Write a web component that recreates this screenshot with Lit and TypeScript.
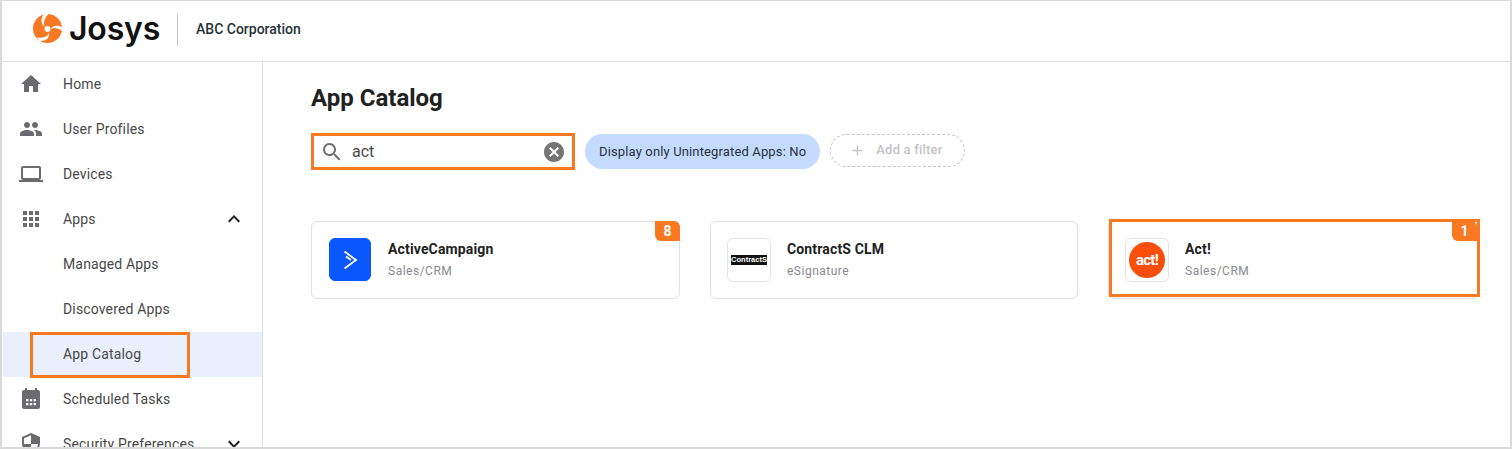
import { css, html, LitElement, svg } from 'lit';
import { customElement } from 'lit/decorators.js';

const icons = {
  home: svg`<path d="M10 20v-6h4v6h5v-8h3L12 3 2 12h3v8z"/>`,
  people: svg`<path d="M16 11c1.66 0 2.99-1.34 2.99-3S17.66 5 16 5c-1.66 0-3 1.34-3 3s1.34 3 3 3zm-8 0c1.66 0 2.99-1.34 2.99-3S9.66 5 8 5C6.34 5 5 6.34 5 8s1.34 3 3 3zm0 2c-2.33 0-7 1.17-7 3.5V19h14v-2.5c0-2.33-4.67-3.5-7-3.5zm8 0c-.29 0-.62.02-.97.05 1.16.84 1.97 1.97 1.97 3.45V19h6v-2.5c0-2.33-4.67-3.5-7-3.5z"/>`,
  laptop: svg`<path d="M20 18c1.1 0 1.99-.9 1.99-2L22 6c0-1.1-.9-2-2-2H4c-1.1 0-2 .9-2 2v10c0 1.1.9 2 2 2H0v2h24v-2h-4zM4 6h16v10H4V6z"/>`,
  apps: svg`<path d="M4 8h4V4H4v4zm6 12h4v-4h-4v4zm-6 0h4v-4H4v4zm0-6h4v-4H4v4zm6 0h4v-4h-4v4zm6-10v4h4V4h-4zm-6 4h4V4h-4v4zm6 6h4v-4h-4v4zm0 6h4v-4h-4v4z"/>`,
  calendar: svg`<path fill-rule="evenodd" d="M6 1h2v2h8V1h2v2h1c1.1 0 2 .9 2 2v15c0 1.1-.9 2-2 2H5c-1.1 0-2-.9-2-2V5c0-1.1.9-2 2-2h1V1zm1 11v2.200h2.400V12H7zm3.800 0v2.200h2.400V12h-2.400zm3.800 0v2.200H17V12h-2.400zM7 16v2.200h2.400V16H7zm3.800 0v2.200h2.400V16h-2.400zm3.800 0v2.200H17V16h-2.400z"/>`,
  shield: svg`<path fill-rule="evenodd" d="M12 1 3 5v6c0 5.500 3.800 10.700 9 12 5.200-1.300 9-6.500 9-12V5l-9-4zm0 2.200V12H5V6.300l7-3.100zM12 12h7c-.5 4.100-3.300 7.800-7 8.900V12z"/>`,
  up: svg`<path d="M7.410 15.410 12 10.830l4.590 4.580L18 14l-6-6-6 6z"/>`,
  down: svg`<path d="M7.410 8.590 12 13.170l4.590-4.580L18 10l-6 6-6-6z"/>`,
  search: svg`<path d="M15.500 14h-.79l-.28-.27C15.410 12.590 16 11.110 16 9.500 16 5.910 13.090 3 9.500 3S3 5.910 3 9.500 5.910 16 9.500 16c1.610 0 3.090-.59 4.230-1.570l.27.28v.79l5 4.990L20.490 19l-4.990-5zm-6 0C7.010 14 5 11.990 5 9.500S7.010 5 9.500 5 14 7.010 14 9.500 11.990 14 9.500 14z"/>`,
  cancel: svg`<path d="M12 2C6.470 2 2 6.470 2 12s4.470 10 10 10 10-4.470 10-10S17.530 2 12 2zm5 13.590L15.590 17 12 13.410 8.410 17 7 15.590 10.590 12 7 8.410 8.410 7 12 10.590 15.590 7 17 8.410 13.410 12 17 15.590z"/>`,
  plus: svg`<path d="M19 13h-6v6h-2v-6H5v-2h6V5h2v6h6v2z"/>`,
};

type IconName = keyof typeof icons;

const icon = (name: IconName, size = 24) =>
  html`<svg class="icon" width=${size} height=${size} viewBox="0 0 24 24" fill="currentColor">${icons[name]}</svg>`;

interface NavItem {
  label: string;
  icon?: IconName;
  chevron?: IconName;
  active?: boolean;
}

const NAV: NavItem[] = [
  { label: 'Home', icon: 'home' },
  { label: 'User Profiles', icon: 'people' },
  { label: 'Devices', icon: 'laptop' },
  { label: 'Apps', icon: 'apps', chevron: 'up' },
  { label: 'Managed Apps' },
  { label: 'Discovered Apps' },
  { label: 'App Catalog', active: true },
  { label: 'Scheduled Tasks', icon: 'calendar' },
  { label: 'Security Preferences', icon: 'shield', chevron: 'down' },
];

@customElement('app-root')
export class AppRoot extends LitElement {
  static override styles = css`
    :host {
      display: block;
      box-sizing: border-box;
      height: 449px;
      overflow: hidden;
      background: #fff;
      border: solid #d9d9d9;
      border-width: 1px 2px 2px 2px;
      font-family: Roboto, 'Liberation Sans', sans-serif;
      color: #212121;
    }

    * {
      box-sizing: border-box;
    }

    .icon {
      display: block;
      flex: none;
    }

    .header {
      display: flex;
      align-items: center;
      height: 61px;
      margin-left: 1px;
      padding: 0 0 4px 30px;
      border-bottom: 1px solid #e0e0e0;
    }

    .mark {
      display: block;
      flex: none;
      margin-bottom: 1px;
    }

    .wordmark {
      margin-left: 7px;
      font-family: Inter, Roboto, sans-serif;
      font-size: 32px;
      font-weight: 600;
      letter-spacing: -0.2px;
      color: #111;
      line-height: 1;
    }

    .divider {
      width: 1px;
      height: 32px;
      margin: 2px 18px 0 17px;
      background: #c4c4c4;
    }

    .company {
      font-size: 14px;
      font-weight: 500;
      color: #263238;
    }

    .body {
      display: flex;
      height: 386px;
      margin-left: 1px;
    }

    .sidebar {
      flex: none;
      width: 260px;
      border-right: 1px solid #e0e0e0;
    }

    .nav-row {
      position: relative;
      display: flex;
      align-items: center;
      height: 45px;
      padding: 0 0 2px 60px;
      font-size: 14px;
      letter-spacing: 0.15px;
      color: #484848;
    }

    .nav-row.active {
      background: #e9f0fc;
    }

    .nav-icon {
      position: absolute;
      left: 16px;
      top: 10px;
      color: #6b6b6f;
    }

    .nav-chevron {
      position: absolute;
      right: 16px;
      top: 10px;
      color: #212121;
    }

    .mark-box {
      position: absolute;
      border: 3px solid #f97822;
      pointer-events: none;
    }

    .nav-mark {
      left: 27px;
      top: 0;
      width: 160px;
      height: 46px;
    }

    .main {
      flex: 1;
      padding: 21px 0 0 48px;
    }

    h1 {
      margin: 0;
      font-size: 24px;
      line-height: 30px;
      font-weight: 700;
      letter-spacing: 0;
      color: #212121;
    }

    .filters {
      display: flex;
      align-items: flex-start;
      margin-top: 20px;
    }

    .search {
      display: flex;
      align-items: center;
      width: 264px;
      height: 37px;
      padding: 0 6px;
      border: 3px solid #f97822;
      color: #6f6f6f;
    }

    .search-text {
      flex: 1;
      margin-left: 8px;
      font-size: 16px;
      color: #484848;
    }

    .clear {
      color: #757575;
    }

    .chip {
      display: flex;
      align-items: center;
      height: 35px;
      margin: 1px 0 0 10px;
      padding: 0 14px;
      border-radius: 18px;
      background: #c5daff;
      font-size: 13px;
      letter-spacing: 0.14px;
      white-space: nowrap;
      color: #263238;
    }

    .add-filter {
      display: flex;
      align-items: center;
      width: 135px;
      height: 33px;
      margin: 1px 0 0 10px;
      padding-left: 18px;
      border: 1px dashed #c4c4c4;
      border-radius: 17px;
      font-size: 13px;
      font-weight: 500;
      letter-spacing: 0.2px;
      color: #c4c4c4;
    }

    .add-filter span {
      margin-left: 10px;
      padding-bottom: 2px;
    }

    .cards {
      display: grid;
      grid-template-columns: 369px 368px 370px;
      column-gap: 30px;
      margin-top: 51px;
    }

    .card {
      position: relative;
      display: flex;
      align-items: center;
      height: 78px;
      padding: 0 0 1px 16px;
      border: 1px solid #e0e0e0;
      border-radius: 6px;
      background: #fff;
    }

    .logo {
      flex: none;
      display: flex;
      align-items: center;
      justify-content: center;
      width: 44px;
      height: 44px;
      border: 1px solid #e4e4e4;
      border-radius: 6px;
      overflow: hidden;
    }

    .logo.campaign {
      width: 42px;
      height: 43px;
      margin: 0 1px;
      background: #0a56ff;
      border-color: #0a56ff;
      color: #fff;
    }

    .logo-contract {
      width: 36px;
      height: 10px;
      background: #111;
      color: #fff;
      font-family: 'Liberation Sans', sans-serif;
      font-size: 7.500px;
      line-height: 10px;
      font-weight: 700;
      text-align: center;
      white-space: nowrap;
    }

    .logo-act {
      display: flex;
      align-items: center;
      justify-content: center;
      width: 36px;
      height: 36px;
      border-radius: 50%;
      background: #fa4f0a;
      color: #fff;
      font-size: 15px;
      font-weight: 700;
      letter-spacing: -0.7px;
    }

    .card-text {
      margin-left: 16px;
    }

    .card-name {
      font-size: 14px;
      line-height: 18px;
      font-weight: 700;
      letter-spacing: 0.15px;
      color: #212121;
    }

    .card-type {
      margin-top: 5px;
      font-size: 12px;
      line-height: 16px;
      letter-spacing: 0.5px;
      color: #8a8a8f;
    }

    .badge {
      position: absolute;
      top: -1px;
      right: -1px;
      width: 25px;
      height: 20px;
      border-radius: 0 6px 0 6px;
      background: #f97822;
      color: #fff;
      font-size: 14px;
      line-height: 20px;
      font-weight: 700;
      text-align: center;
    }

    .badge.inset {
      right: 0;
    }

    .card-mark {
      left: 0;
      top: -3px;
      right: -3px;
      bottom: 1px;
    }
  `;

  private renderNav(item: NavItem) {
    return html`
      <div class="nav-row ${item.active ? 'active' : ''}">
        ${item.icon ? html`<span class="nav-icon">${icon(item.icon)}</span>` : ''}
        ${item.label}
        ${item.chevron ? html`<span class="nav-chevron">${icon(item.chevron)}</span>` : ''}
        ${item.active ? html`<div class="mark-box nav-mark"></div>` : ''}
      </div>
    `;
  }

  override render() {
    return html`
      <div class="header">
        <svg class="mark" width="29" height="29" viewBox="0 0 30 30">
          <circle cx="15" cy="15" r="15" fill="#f97822"/>
          <path d="M11.500 0C7.500 4.500 8 10 12.500 13.500 10 9 12 4 16 0z" fill="#fff"/>
          <path d="M30 13.500C24.500 10.500 19 12.500 17.500 17 20 13.500 25 14 30 17.500z" fill="#fff"/>
          <path d="M7 28C13 28.500 17.500 25 16.500 19.500 15 24 10 25.500 4 24z" fill="#fff"/>
          <circle cx="15" cy="15.500" r="3" fill="#fff"/>
        </svg>
        <span class="wordmark">Josys</span>
        <div class="divider"></div>
        <span class="company">ABC Corporation</span>
      </div>
      <div class="body">
        <nav class="sidebar">${NAV.map((item) => this.renderNav(item))}</nav>
        <main class="main">
          <h1>App Catalog</h1>
          <div class="filters">
            <div class="search">
              ${icon('search')}
              <span class="search-text">act</span>
              <span class="clear">${icon('cancel')}</span>
            </div>
            <div class="chip">Display only Unintegrated Apps: No</div>
            <div class="add-filter">${icon('plus', 17)}<span>Add a filter</span></div>
          </div>
          <div class="cards">
            <div class="card">
              <div class="logo campaign">
                <svg width="20" height="24" viewBox="0 0 20 24" fill="none" stroke="#fff" stroke-width="1.800">
                  <path d="M4.500 3.500 16 12 4.500 20.500"/>
                  <path d="M6 8.500 11 12"/>
                </svg>
              </div>
              <div class="card-text">
                <div class="card-name">ActiveCampaign</div>
                <div class="card-type">Sales/CRM</div>
              </div>
              <div class="badge">8</div>
            </div>
            <div class="card">
              <div class="logo"><div class="logo-contract">ContractS</div></div>
              <div class="card-text">
                <div class="card-name">ContractS CLM</div>
                <div class="card-type">eSignature</div>
              </div>
            </div>
            <div class="card">
              <div class="logo"><div class="logo-act">act!</div></div>
              <div class="card-text">
                <div class="card-name">Act!</div>
                <div class="card-type">Sales/CRM</div>
              </div>
              <div class="badge inset">1</div>
              <div class="mark-box card-mark"></div>
            </div>
          </div>
        </main>
      </div>
    `;
  }
}

declare global {
  interface HTMLElementTagNameMap {
    'app-root': AppRoot;
  }
}
